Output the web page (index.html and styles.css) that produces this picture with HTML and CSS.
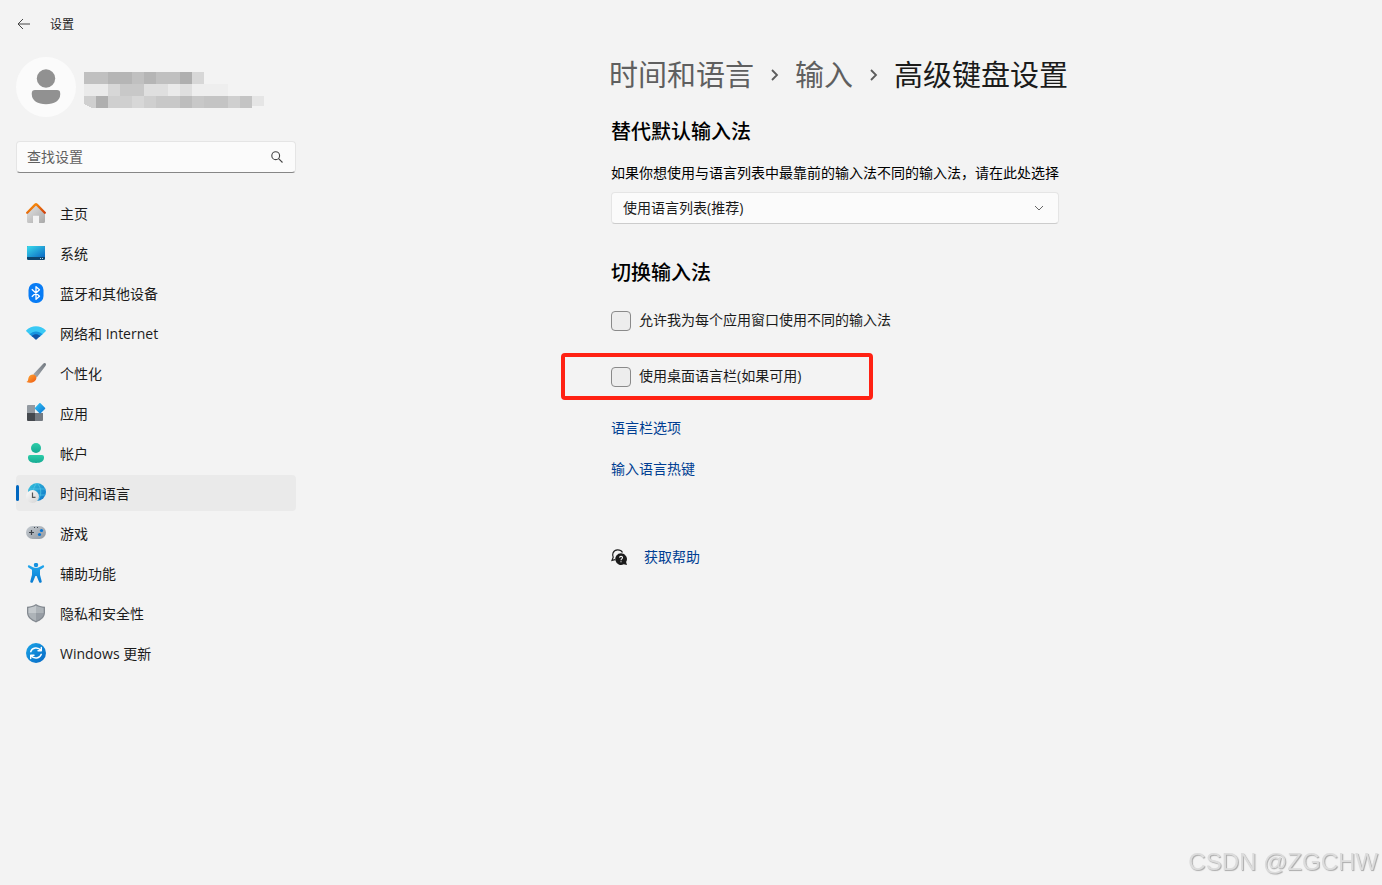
FILE: index.html
```
<!DOCTYPE html>
<html lang="zh-CN">
<head>
    <meta charset="UTF-8">
    <meta name="viewport" content="width=device-width, initial-scale=1.0">
    <title>设置</title>
    <link rel="stylesheet" href="styles.css">
</head>
<body>

    <header class="titlebar">
        <button class="back" type="button" aria-label="返回">
            <svg width="14" height="12" viewBox="0 0 14 12" fill="none" stroke="#444" stroke-width="1"><path d="M13 6H1M6 1 1 6l5 5"/></svg>
        </button>
        <span>设置</span>
    </header>

    <div class="layout">
        <aside class="sidebar">
            <div class="account">
                <div class="avatar">
                    <svg width="60" height="60" viewBox="0 0 60 60" fill="#919191">
                        <circle cx="30" cy="21.500" r="9.200"/>
                        <path d="M19 33h22a3.200 3.200 0 0 1 3.200 3.200v1.300c0 6-6 9.800-14.200 9.800s-14.200-3.800-14.200-9.800v-1.300A3.200 3.200 0 0 1 19 33z"/>
                    </svg>
                </div>
                <!-- account name and mail, pixelated -->
                <svg class="mosaic" width="180" height="36" viewBox="0 0 180 36" shape-rendering="crispEdges">
                    <path fill="#c0c0c0" d="M0 0h24v12H0zM48 0h12v12H48zM72 0h24v12H72z"/>
                    <path fill="#b5b5b5" d="M24 0h24v12H24zM60 0h12v12H60z"/>
                    <path fill="#afafaf" d="M96 0h12v12H96zM12 24h12v12H12z"/>
                    <path fill="#d7d7d7" d="M108 0h12v12h-12zM24 12h12v12H24zM48 24h12v12H48z"/>
                    <path fill="#eaeaea" d="M0 12h24v12H0zM84 12h12v12H84z"/>
                    <path fill="#c8c8c8" d="M36 12h24v12H36zM72 24h24v12H72zM108 24h12v12h-12z"/>
                    <path fill="#dfdfdf" d="M60 12h24v12H60zM96 12h12v12H96z"/>
                    <path fill="#eee" d="M108 12h36v12h-36z"/>
                    <path fill="#cfcfcf" d="M0 24h12v12H8l-8-4zM24 24h24v12H24zM60 24h12v12H60zM144 24h12v12h-12z"/>
                    <path fill="#bdbdbd" d="M96 24h12v12H96z"/>
                    <path fill="#c4c4c4" d="M120 24h24v12h-24zM156 24h12v12h-12z"/>
                    <path fill="#e5e5e5" d="M168 24h12v10h-12z"/>
                </svg>
            </div>

            <div class="search">
                <input type="text" placeholder="查找设置" aria-label="查找设置">
                <svg width="12" height="12" viewBox="0 0 12 12" fill="none" stroke="#444" stroke-width="1.100"><circle cx="4.700" cy="4.700" r="3.900"/><path d="m7.600 7.600 3.900 3.900"/></svg>
            </div>

            <nav class="menu">
                <a href="#">
                    <svg width="20" height="20" viewBox="0 0 20 20">
                        <defs>
                            <linearGradient id="wall" x2="1" y2="1"><stop stop-color="#e4e4e4"/><stop offset="1" stop-color="#a8a8a8"/></linearGradient>
                            <linearGradient id="roof" x2="1" y2="1"><stop stop-color="#ff9a0a"/><stop offset="1" stop-color="#d0400d"/></linearGradient>
                        </defs>
                        <path fill="url(#wall)" d="M10 2 1 10v8.500A1.500 1.500 0 0 0 2.500 20H7v-7.200h6V20h4.500a1.500 1.500 0 0 0 1.500-1.500V10z"/>
                        <path fill="none" stroke="url(#roof)" stroke-width="2.300" stroke-linecap="round" stroke-linejoin="round" d="m1.200 9.800 8-8.200q.8-.7 1.600 0l8 8.200"/>
                    </svg>
                    <span>主页</span>
                </a>
                <a href="#">
                    <svg width="20" height="20" viewBox="0 0 20 20">
                        <defs><linearGradient id="screen" x2="1" y2="1"><stop stop-color="#3adcec"/><stop offset="1" stop-color="#0a68c4"/></linearGradient></defs>
                        <rect x="1" y="3" width="18" height="14" rx="1.300" fill="#0d4670"/>
                        <path fill="url(#screen)" d="M2.300 3h15.400A1.300 1.300 0 0 1 19 4.300V14H1V4.300A1.300 1.300 0 0 1 2.300 3z"/>
                        <path fill="#b8d4e8" d="M14 15h1v1h-1zM16 15h1v1h-1z"/>
                    </svg>
                    <span>系统</span>
                </a>
                <a href="#">
                    <svg width="20" height="20" viewBox="0 0 20 20">
                        <rect x="2.500" width="15" height="20" rx="7" fill="#087cf5"/>
                        <path fill="none" stroke="#fff" stroke-width="1.300" stroke-linejoin="round" d="m5.800 6.300 7.700 7-3.500 3V3.700l3.500 3-7.700 7"/>
                    </svg>
                    <span>蓝牙和其他设备</span>
                </a>
                <a href="#">
                    <svg width="20" height="20" viewBox="0 0 20 20">
                        <path fill="#39c9f5" d="M.3 7.300C5.500 1.800 14.500 1.800 19.700 7.300q.4.500 0 1l-3.100 3H3.400l-3.100-3q-.4-.5 0-1z"/>
                        <path fill="#1595e0" d="M3.400 11.300c3.800-3.900 9.400-3.900 13.200 0L13.500 14h-7z"/>
                        <path fill="#1056a8" d="M5.700 13.100c2.600-2.600 6-2.600 8.600 0l-3.800 3.500q-.5.400-1 0z"/>
                    </svg>
                    <span>网络和 Internet</span>
                </a>
                <a href="#">
                    <svg width="20" height="20" viewBox="0 0 20 20">
                        <defs>
                            <linearGradient id="handle" x1="1" x2="0" y2="1"><stop stop-color="#737980"/><stop offset="1" stop-color="#a4aab1"/></linearGradient>
                            <linearGradient id="bristle" x2="1" y2="1"><stop stop-color="#ffad38"/><stop offset="1" stop-color="#ee5710"/></linearGradient>
                        </defs>
                        <path fill="url(#handle)" d="M19.600.5c.7.7.4 1.700-.2 2.600l-8.600 11.400-3.500-3.200L17.200.8c.8-.7 1.700-1 2.400-.3z"/>
                        <path fill="url(#bristle)" d="M7 11.500c1.700-.1 3.500 1.500 3.400 3.400-.3 4-5.400 5.900-10 4.200 1.900-.8 1.500-2.200 2.100-4.300.7-2.200 2.600-3.200 4.500-3.300z"/>
                    </svg>
                    <span>个性化</span>
                </a>
                <a href="#">
                    <svg width="20" height="20" viewBox="0 0 20 20">
                        <defs><linearGradient id="tile" x2="1" y2="1"><stop stop-color="#35c6f5"/><stop offset="1" stop-color="#0874d4"/></linearGradient></defs>
                        <path fill="#939aa1" d="M2 2h7v8H1V3a1 1 0 0 1 1-1z"/>
                        <path fill="#45494e" d="M1 10h8v8H2a1 1 0 0 1-1-1z"/>
                        <path fill="#747a81" d="M9 10h8v7a1 1 0 0 1-1 1H9z"/>
                        <path fill="url(#tile)" d="m14.500.2 4.500 4.500q.6.600 0 1.200l-4.300 4.400q-.6.600-1.200 0L9.100 5.900q-.6-.6 0-1.200L13.300.2q.6-.5 1.200 0z"/>
                    </svg>
                    <span>应用</span>
                </a>
                <a href="#">
                    <svg width="20" height="20" viewBox="0 0 20 20">
                        <defs><linearGradient id="person" x2="0" y2="1"><stop stop-color="#2ccda8"/><stop offset="1" stop-color="#15aa93"/></linearGradient></defs>
                        <circle cx="10" cy="5" r="5" fill="url(#person)"/>
                        <path fill="url(#person)" d="M4 12h12a2 2 0 0 1 2 2v.8c0 3.500-3.500 5.200-8 5.200s-8-1.700-8-5.200V14a2 2 0 0 1 2-2z"/>
                    </svg>
                    <span>帐户</span>
                </a>
                <a href="#" class="active" aria-current="page">
                    <svg width="20" height="20" viewBox="0 0 20 20">
                        <defs>
                            <linearGradient id="globe" x2="1" y2="1"><stop stop-color="#35c4dc"/><stop offset="1" stop-color="#0f72c8"/></linearGradient>
                            <linearGradient id="dial" x2="1" y2="1"><stop stop-color="#fcfcfc"/><stop offset="1" stop-color="#d2d2d2"/></linearGradient>
                        </defs>
                        <circle cx="11" cy="9" r="9" fill="url(#globe)"/>
                        <path fill="none" stroke="#55c8e8" stroke-width=".7" d="M3 6h16M3 12h16M11 0C6 5 6 13 11 18M11 0c5 5 5 13 0 18"/>
                        <circle cx="6.500" cy="13.500" r="6.500" fill="url(#dial)"/>
                        <path fill="none" stroke="#555" stroke-width="1.200" d="M6.500 9.500v4.900h3"/>
                    </svg>
                    <span>时间和语言</span>
                </a>
                <a href="#">
                    <svg width="20" height="20" viewBox="0 0 20 20">
                        <defs><linearGradient id="pad" x2="1" y2="1"><stop stop-color="#c5cbd1"/><stop offset="1" stop-color="#9299a1"/></linearGradient></defs>
                        <rect y="3" width="20" height="13" rx="6.500" fill="url(#pad)"/>
                        <path fill="none" stroke="#3c4249" stroke-width="1.200" d="M5.500 7v5M3 9.500h5"/>
                        <path fill="#42474d" d="M8 4h1v1H8zM11 4h1v1h-1z"/>
                        <circle cx="15.500" cy="7.500" r="1.600" fill="#0875d4"/>
                        <circle cx="13.500" cy="11.500" r="1.600" fill="#0875d4"/>
                    </svg>
                    <span>游戏</span>
                </a>
                <a href="#">
                    <svg width="20" height="20" viewBox="0 0 20 20">
                        <defs><linearGradient id="body" x2="0" y2="1"><stop stop-color="#22a7ed"/><stop offset="1" stop-color="#087bd1"/></linearGradient></defs>
                        <circle cx="10" cy="2" r="2.200" fill="#1591df"/>
                        <path fill="url(#body)" d="M3.600 2.400 7 4.300q3 1.200 6 0l3.400-1.900c1.400-.7 2.400 1.100 1.200 2L14 6.800v5l1.700 6.400c.4 1.600-2 2.400-2.600.8L10.600 13H9.400L6.900 19c-.6 1.600-3 .8-2.600-.8L6 11.800v-5L2.400 4.400c-1.200-.9-.2-2.700 1.200-2z"/>
                    </svg>
                    <span>辅助功能</span>
                </a>
                <a href="#">
                    <svg width="20" height="20" viewBox="0 0 20 20">
                        <path fill="#838990" d="M10 1c2.800 2 5.500 2.600 9 2.800v6c0 4.400-3.800 7.600-9 9.700-5.200-2.100-9-5.300-9-9.700v-6C4.500 3.600 7.200 3 10 1z"/>
                        <path fill="#c3c8cc" d="M10 2.600C7.500 4 5 4.600 2.300 4.900V10H10z"/>
                        <path fill="#adb3b8" d="M10 2.600c2.500 1.400 5 2 7.700 2.300V10H10zM2.300 10H10v8C5.700 16.200 2.300 13.500 2.300 10z"/>
                        <path fill="#979da4" d="M10 10h7.700c0 3.500-3.400 6.200-7.700 8z"/>
                    </svg>
                    <span>隐私和安全性</span>
                </a>
                <a href="#">
                    <svg width="20" height="20" viewBox="0 0 20 20">
                        <defs><linearGradient id="update" x2="1" y2="1"><stop stop-color="#1aa5e8"/><stop offset="1" stop-color="#0868c4"/></linearGradient></defs>
                        <circle cx="10" cy="10" r="10" fill="url(#update)"/>
                        <path fill="none" stroke="#fff" stroke-width="1.400" stroke-linecap="round" stroke-linejoin="round" d="M4.700 8.700C6 4.500 12 3.500 15 7.500M15.300 4.500v3.300H12M15.300 11.300C14 15.500 8 16.500 5 12.500M4.700 15.500v-3.300H8"/>
                    </svg>
                    <span>Windows 更新</span>
                </a>
            </nav>
        </aside>

        <main class="content">
            <div class="breadcrumb">
                <a href="#">时间和语言</a>
                <svg width="9" height="12" viewBox="0 0 9 12" fill="none" stroke="#5c5c5c" stroke-width="1.800"><path d="m2 1 5 5-5 5"/></svg>
                <a href="#">输入</a>
                <svg width="9" height="12" viewBox="0 0 9 12" fill="none" stroke="#5c5c5c" stroke-width="1.800"><path d="m2 1 5 5-5 5"/></svg>
                <h1>高级键盘设置</h1>
            </div>

            <section class="default-input">
                <h2>替代默认输入法</h2>
                <label for="method">如果你想使用与语言列表中最靠前的输入法不同的输入法，请在此处选择</label>
                <div class="select">
                    <select id="method">
                        <option>使用语言列表(推荐)</option>
                    </select>
                    <svg width="10" height="6" viewBox="0 0 10 6" fill="none" stroke="#666" stroke-width="1"><path d="m1 1 4 4 4-4"/></svg>
                </div>
            </section>

            <section class="switch-input">
                <h2>切换输入法</h2>
                <label class="check"><input type="checkbox"><span>允许我为每个应用窗口使用不同的输入法</span></label>
                <label class="check marked"><input type="checkbox"><span>使用桌面语言栏(如果可用)</span></label>
                <a class="link" href="#">语言栏选项</a>
                <a class="link" href="#">输入语言热键</a>
            </section>

            <a class="help" href="#">
                <svg width="17" height="17" viewBox="0 0 17 17">
                    <path fill="none" stroke="#222" stroke-width="1.200" d="M11.500 3.500C9.500 0 3.500 0 2 4c-.6 1.600-.3 3 .2 4.200L1 11.300l3-.7"/>
                    <path fill="#1b1b1b" d="M10 4.300a5.800 5.800 0 1 0 2.800 10.900l3.200.9-.9-3A5.800 5.800 0 0 0 10 4.300z"/>
                    <path fill="none" stroke="#f3f3f3" stroke-width="1.100" d="M8.500 8.600c.2-1.800 3.200-1.600 3 .2-.1 1-1.500 1.200-1.500 2.400M10 12.200v1.100"/>
                </svg>
                <span>获取帮助</span>
            </a>
        </main>
    </div>

    <div class="watermark">CSDN @ZGCHW</div>

</body>
</html>
```
FILE: styles.css
```
* {
    box-sizing: border-box;
}
body {
    margin: 0;
    background: #f3f3f3;
    color: #1b1b1b;
    font: 14px/20px "Open Sans", "Noto Sans CJK SC", sans-serif;
}
a {
    color: inherit;
    text-decoration: none;
}
svg {
    display: block;
    flex: none;
}
h1, h2 {
    margin: 0;
}

.titlebar {
    display: flex;
    align-items: center;
    gap: 14px;
    height: 48px;
    padding-left: 12px;
    font-size: 12px;
}
.titlebar span,
.menu span {
    padding-top: 2px;
}
.back {
    display: flex;
    align-items: center;
    justify-content: center;
    width: 24px;
    height: 24px;
    padding: 0;
    border: 0;
    background: none;
}

.layout {
    display: flex;
}
.sidebar {
    flex: none;
    width: 312px;
    padding: 9px 16px;
}
.account {
    display: flex;
    align-items: center;
    gap: 8px;
    margin-bottom: 24px;
}
.avatar {
    border-radius: 50%;
    background: #fbfbfb;
}
.mosaic {
    margin-top: 6px;
}

.search {
    position: relative;
    margin-bottom: 22px;
}
.search input {
    display: block;
    width: 100%;
    height: 32px;
    padding: 0 36px 2px 10px;
    border: 1px solid #e5e5e5;
    border-bottom-color: #868686;
    border-radius: 4px;
    background: #fbfbfb;
    font: inherit;
}
.search input::placeholder {
    color: #5f5f5f;
}
.search svg {
    position: absolute;
    top: 10px;
    right: 13px;
}

.menu {
    display: flex;
    flex-direction: column;
    gap: 4px;
}
.menu a {
    display: flex;
    align-items: center;
    gap: 14px;
    height: 36px;
    padding-left: 10px;
    border-radius: 4px;
}
.menu .active {
    position: relative;
    background: #eaeaea;
}
.menu .active::before {
    content: "";
    position: absolute;
    left: 0;
    top: 10px;
    width: 3px;
    height: 16px;
    border-radius: 2px;
    background: #0067c0;
}

.content {
    flex: 1;
    padding: 7px 24px 24px 299px;
}
.breadcrumb {
    display: flex;
    align-items: center;
    gap: 16px;
    margin: 0 0 23px -2px;
    color: #5f5f5f;
    font-size: 29px;
    line-height: 40px;
}
.breadcrumb h1 {
    color: #1b1b1b;
    font-size: 29px;
    font-weight: 400;
}
h2 {
    color: #000;
    font-size: 20px;
    font-weight: 500;
    line-height: 28px;
}

.default-input {
    margin-bottom: 35px;
}
.default-input label {
    display: block;
    margin: 17px 0 9px;
    color: #000;
}
.select {
    position: relative;
    max-width: 448px;
}
.select select {
    display: block;
    width: 100%;
    height: 32px;
    padding: 0 32px 0 11px;
    appearance: none;
    border: 1px solid #e5e5e5;
    border-bottom-color: #ccc;
    border-radius: 4px;
    background: #fbfbfb;
    color: #1b1b1b;
    font: inherit;
}
.select svg {
    position: absolute;
    top: 13px;
    right: 15px;
}

.switch-input h2 {
    margin-bottom: 24px;
}
.check {
    display: flex;
    align-items: center;
    gap: 8px;
}
.check span {
    padding-bottom: 2px;
    line-height: 18px;
}
.check input {
    width: 20px;
    height: 20px;
    margin: 0;
    appearance: none;
    border: 1px solid #8a8a8a;
    border-radius: 4px;
    background: #ededed;
}
.marked {
    width: 312px;
    height: 47px;
    margin: 22px 0 18px -50px;
    padding-left: 46px;
    border: 4px solid #ff2113;
    border-radius: 4px;
}
.link {
    display: block;
    width: max-content;
    margin-bottom: 21px;
    color: #003e92;
}
.help {
    display: flex;
    align-items: center;
    gap: 16px;
    width: max-content;
    margin-top: 68px;
    color: #003e92;
}

.watermark {
    position: fixed;
    right: 4px;
    bottom: 7px;
    color: #dcdcdc;
    font: 24px/32px "Liberation Sans", sans-serif;
    text-shadow: 1px 1px 1px #aaa;
}
```
